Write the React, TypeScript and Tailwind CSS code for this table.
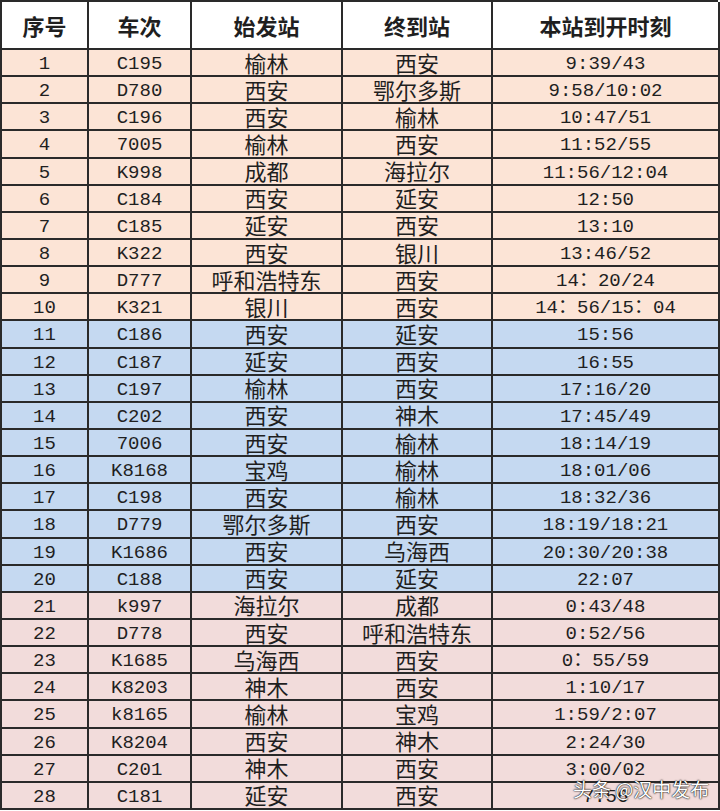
import * as React from 'react';

type Row = [string, string, string, string, string];

const rows: Row[] = [
  ['1', 'C195', '榆林', '西安', '9:39/43'],
  ['2', 'D780', '西安', '鄂尔多斯', '9:58/10:02'],
  ['3', 'C196', '西安', '榆林', '10:47/51'],
  ['4', '7005', '榆林', '西安', '11:52/55'],
  ['5', 'K998', '成都', '海拉尔', '11:56/12:04'],
  ['6', 'C184', '西安', '延安', '12:50'],
  ['7', 'C185', '延安', '西安', '13:10'],
  ['8', 'K322', '西安', '银川', '13:46/52'],
  ['9', 'D777', '呼和浩特东', '西安', '14：20/24'],
  ['10', 'K321', '银川', '西安', '14：56/15：04'],
  ['11', 'C186', '西安', '延安', '15:56'],
  ['12', 'C187', '延安', '西安', '16:55'],
  ['13', 'C197', '榆林', '西安', '17:16/20'],
  ['14', 'C202', '西安', '神木', '17:45/49'],
  ['15', '7006', '西安', '榆林', '18:14/19'],
  ['16', 'K8168', '宝鸡', '榆林', '18:01/06'],
  ['17', 'C198', '西安', '榆林', '18:32/36'],
  ['18', 'D779', '鄂尔多斯', '西安', '18:19/18:21'],
  ['19', 'K1686', '西安', '乌海西', '20:30/20:38'],
  ['20', 'C188', '西安', '延安', '22:07'],
  ['21', 'k997', '海拉尔', '成都', '0:43/48'],
  ['22', 'D778', '西安', '呼和浩特东', '0:52/56'],
  ['23', 'K1685', '乌海西', '西安', '0：55/59'],
  ['24', 'K8203', '神木', '西安', '1:10/17'],
  ['25', 'k8165', '榆林', '宝鸡', '1:59/2:07'],
  ['26', 'K8204', '西安', '神木', '2:24/30'],
  ['27', 'C201', '神木', '西安', '3:00/02'],
  ['28', 'C181', '延安', '西安', '7:56'],
];

const headers = ['序号', '车次', '始发站', '终到站', '本站到开时刻'];
const cols = 'grid grid-cols-[87px_103px_151px_150px_227px]';

function rowBg(i: number) {
  if (i < 10) return 'bg-[#fce4d6]';
  if (i < 20) return 'bg-[#c5d9f1]';
  return 'bg-[#f2dcdb]';
}

const mono = "font-['Liberation_Mono','Noto_Sans_CJK_SC',monospace] text-[19px] pt-[4px]";
const cjk = "font-['Noto_Sans_CJK_SC',sans-serif] text-[22px] pb-[2px]";

export default function App() {
  return (
    <div className="relative w-[720px] h-[811px] bg-white overflow-hidden text-[#1f1f1f]">
      <div className="w-[718px] border-l-2 border-t-2 border-[#2a2a2a]">
        <div className={`${cols} h-[48px] bg-white`}>
          {headers.map((h) => (
            <div
              key={h}
              className="flex items-center justify-center border-r-2 border-b-2 border-[#2a2a2a] font-bold font-['Noto_Sans_CJK_SC',sans-serif] text-[22px] leading-none"
            >
              {h}
            </div>
          ))}
        </div>
        {rows.map((r, i) => (
          <div key={r[0]} className={`${cols} h-[27.15px] ${rowBg(i)}`}>
            {r.map((c, j) => (
              <div
                key={j}
                className={`flex items-center justify-center border-r-2 border-b-2 border-[#2a2a2a] leading-none whitespace-nowrap overflow-visible ${
                  j === 2 || j === 3 ? cjk : mono
                }`}
              >
                {c}
              </div>
            ))}
          </div>
        ))}
      </div>
      <div className="absolute left-[573px] top-[779px] text-white text-[19px] leading-none font-['Noto_Sans_CJK_SC',sans-serif] [text-shadow:0_0_2px_#000,0_0_1px_#000]">
        头条 @汉中发布
      </div>
    </div>
  );
}
